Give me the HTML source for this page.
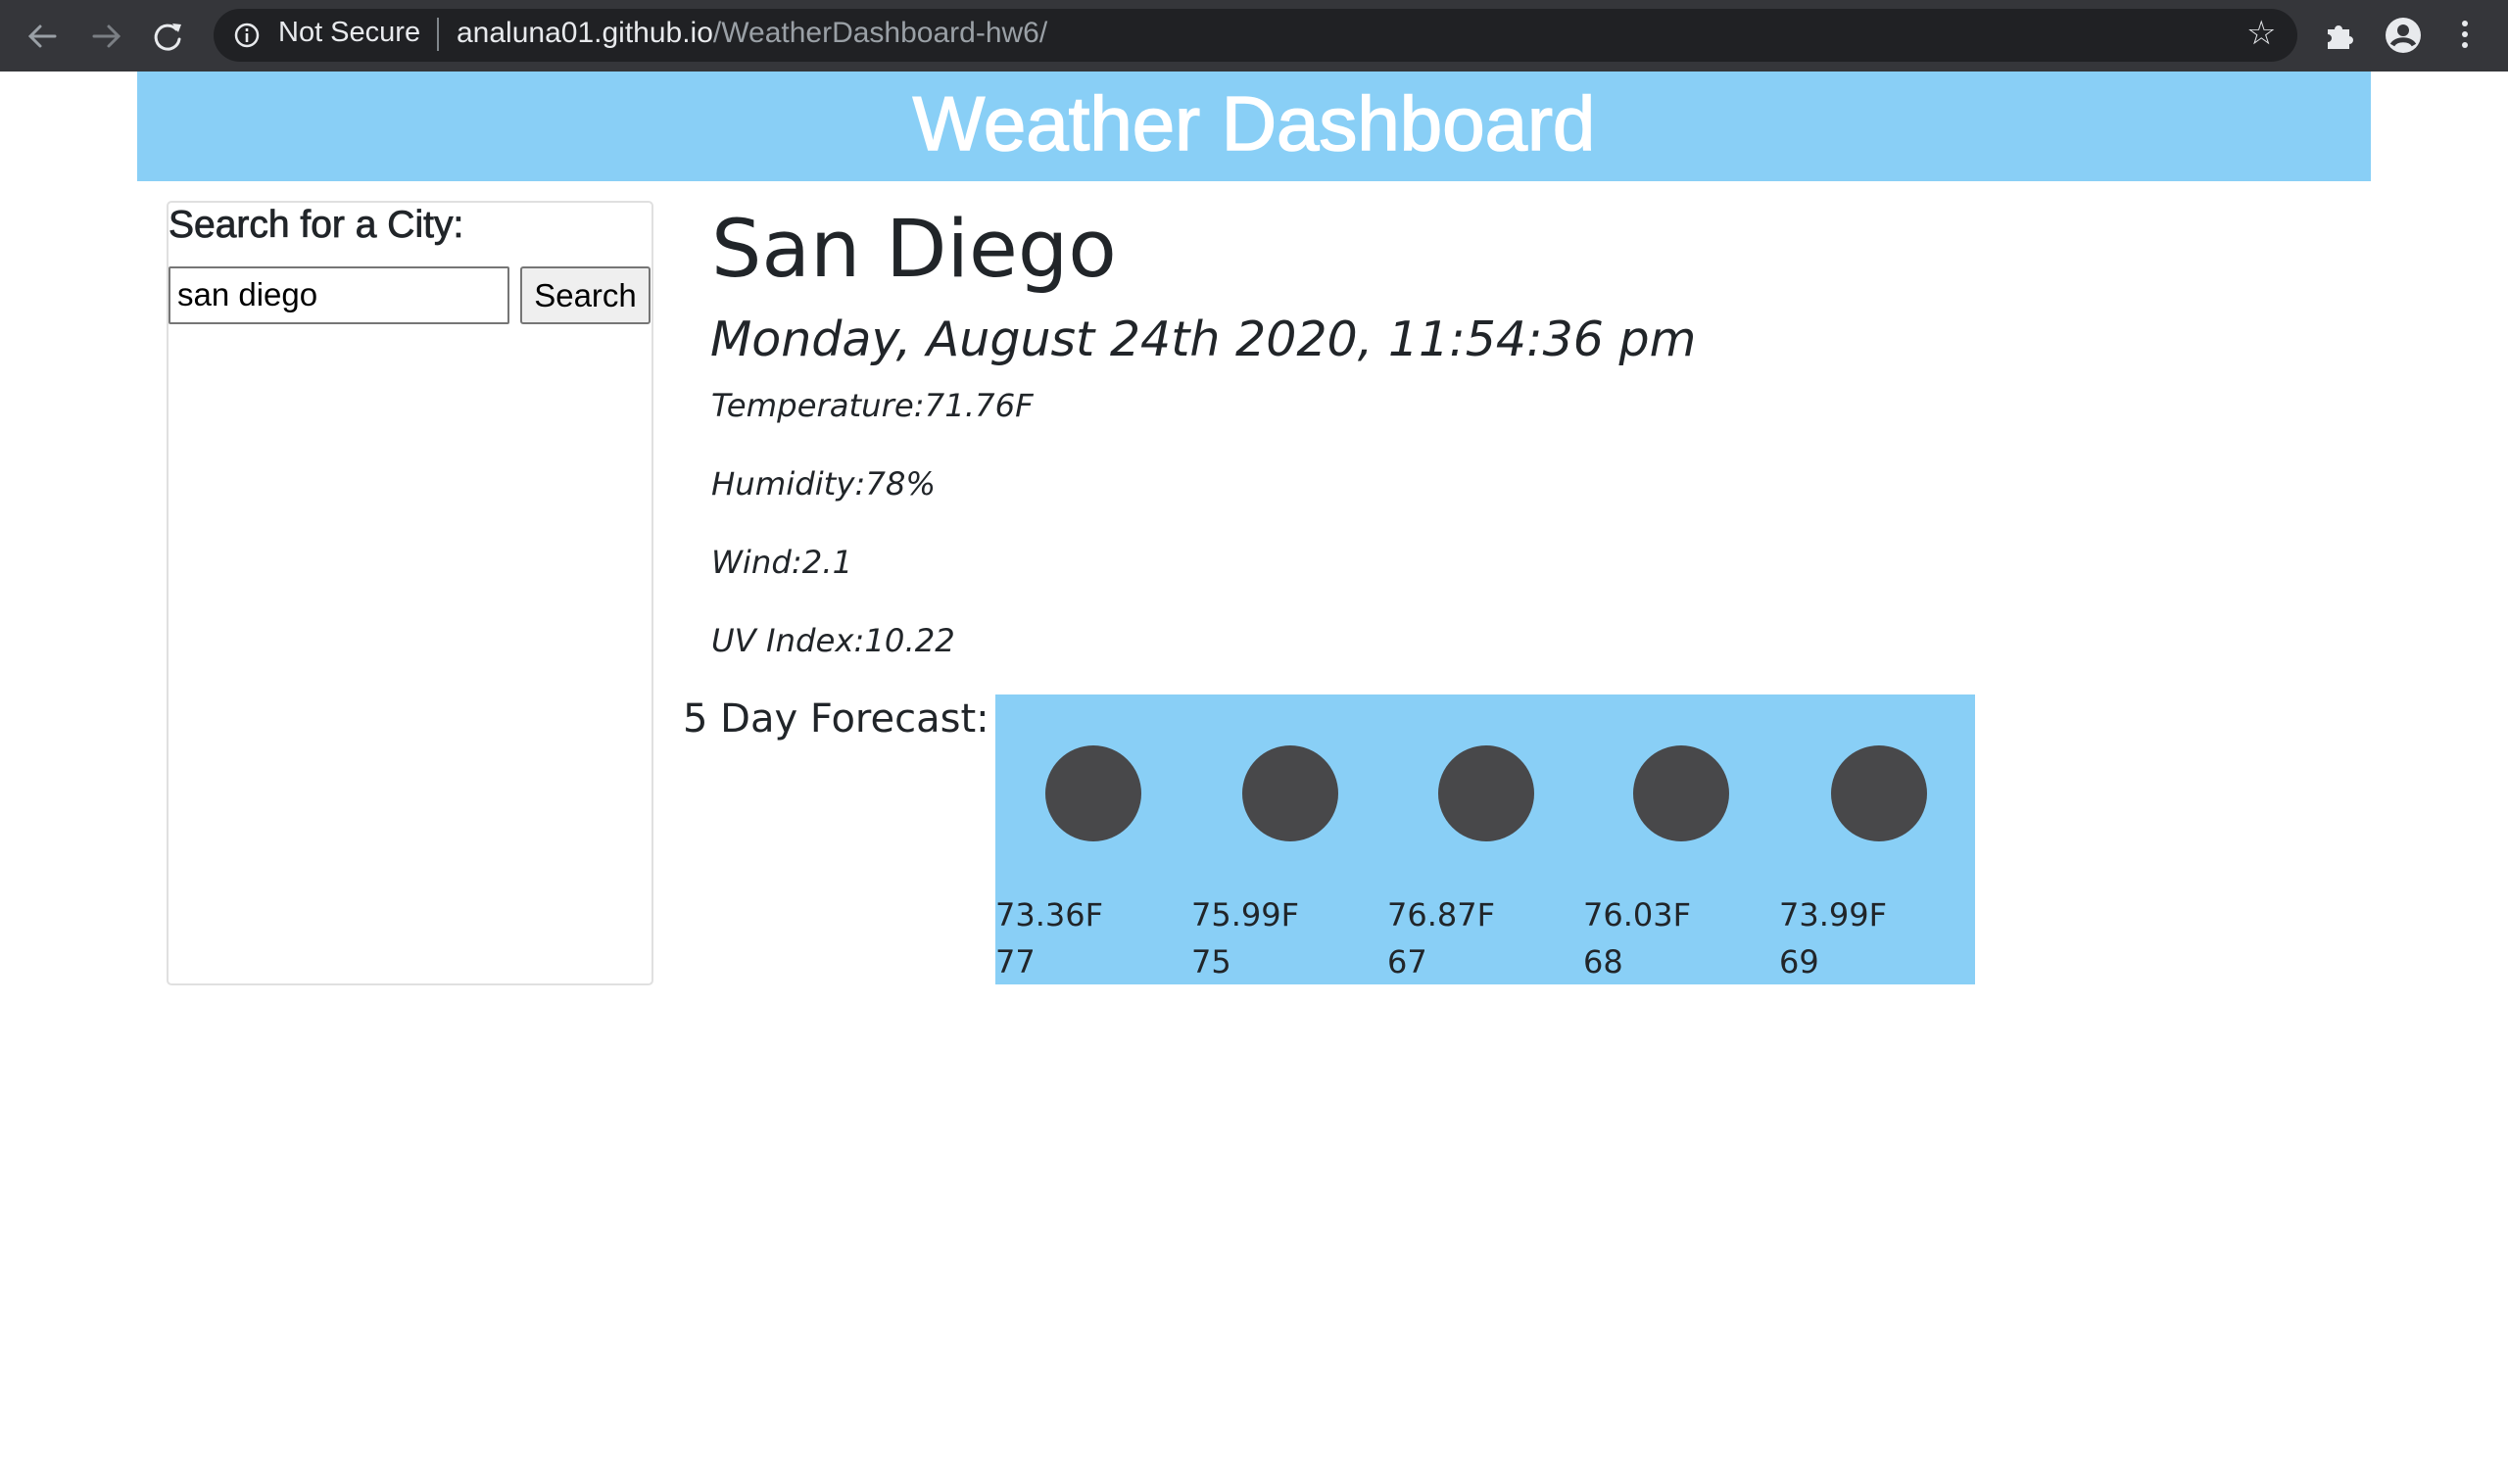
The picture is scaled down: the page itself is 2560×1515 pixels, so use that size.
<!DOCTYPE html>
<html><head><style>
body{margin:0;width:2560px;height:1515px;background:#fff;position:relative;overflow:hidden;font-family:"DejaVu Sans",sans-serif;color:#212529}
.a{position:absolute;white-space:nowrap}
.bar{position:absolute;left:0;top:0;width:2560px;height:73px;background:#35363a}
.url{position:absolute;left:218px;top:9px;width:2127px;height:54px;border-radius:27px;background:#202124}
.circ{position:absolute;width:98px;height:98px;border-radius:50%;background:#48484a;top:761px}
.ft{position:absolute;font-size:32px;line-height:48px;top:910px;color:#212529}
.it{font-style:italic;font-size:32.3px}
</style></head><body>
<div class="bar"></div>
<div class="url"></div>
<svg class="a" style="left:26px;top:20px" width="240" height="34" viewBox="0 0 240 34">
<g stroke="#9aa0a6" stroke-width="3" fill="none" stroke-linecap="round">
<path d="M30 17H6M15 7L5 17l10 10"/>
<path d="M70 17H94M85 7l10 10-10 10" stroke="#7b7f84"/>
<path d="M154 10a12 12 0 1 0 3 10" stroke="#e8eaed"/>
</g><path d="M150 4l9 1-3 8z" fill="#e8eaed"/></svg>
<svg class="a" style="left:238px;top:22px" width="28" height="28"><circle cx="14" cy="14" r="11" stroke="#e8eaed" stroke-width="2.5" fill="none"/><rect x="12.7" y="12" width="2.6" height="9" fill="#e8eaed"/><rect x="12.7" y="7" width="2.6" height="3" fill="#e8eaed"/></svg>
<div class="a" style="left:284px;top:17px;font:29px 'Liberation Sans',sans-serif;color:#e8eaed">Not Secure</div>
<div class="a" style="left:446px;top:18px;width:2px;height:34px;background:#80868b"></div>
<div class="a" style="left:466px;top:17px;font:30px 'Liberation Sans',sans-serif;color:#e8eaed">analuna01.github.io<span style="color:#9aa0a6">/WeatherDashboard-hw6/</span></div>
<div class="a" style="left:2293px;top:14px;font-size:34px;color:#e8eaed">☆</div>
<svg class="a" style="left:2372px;top:20px" width="32" height="32"><path d="M4 10h7a4 4 0 0 1 8 0h7v7a4 4 0 0 1 0 8v5H4v-7a4 4 0 0 0 0-8z" fill="#e8eaed"/></svg>
<svg class="a" style="left:2434px;top:17px" width="38" height="38"><circle cx="19" cy="19" r="18" fill="#e8eaed"/><circle cx="19" cy="14" r="6" fill="#35363a"/><path d="M8 29c4-7 18-7 22 0" stroke="#35363a" stroke-width="5" fill="none"/></svg>
<svg class="a" style="left:2512px;top:20px" width="8" height="32"><circle cx="4" cy="4" r="3" fill="#e8eaed"/><circle cx="4" cy="15" r="3" fill="#e8eaed"/><circle cx="4" cy="26" r="3" fill="#e8eaed"/></svg>

<div class="a" style="left:140px;top:73px;width:2280px;height:112px;background:#89cff6"></div>
<div class="a" style="left:140px;top:70px;width:2280px;height:112px;text-align:center;font:78px/112px 'Liberation Sans',sans-serif;color:#fff;-webkit-text-stroke:1.5px #fff">Weather Dashboard</div>

<div class="a" style="left:170px;top:205px;width:493px;height:797px;border:2px solid #e0e0e0;border-radius:5px"></div>
<div class="a" style="left:172px;top:208px;font:39px 'Liberation Sans',sans-serif;color:#212529;-webkit-text-stroke:0.8px #212529">Search for a City:</div>
<div class="a" style="left:172px;top:272px;width:344px;height:55px;border:2px solid #767676;border-radius:2px"></div>
<div class="a" style="left:181px;top:282px;font:33px 'Liberation Sans',sans-serif;color:#000">san diego</div>
<div class="a" style="left:531px;top:272px;width:129px;height:55px;border:2px solid #767676;border-radius:3px;background:#efefef;font:33px/55px 'Liberation Sans',sans-serif;text-align:center;color:#000">Search</div>

<div class="a" style="left:726px;top:208px;font-size:81px">San Diego</div>
<div class="a" style="left:725px;top:318px;font-size:49px;font-style:italic">Monday, August 24th 2020, 11:54:36 pm</div>
<div class="a it" style="left:726px;top:395px">Temperature:71.76F</div>
<div class="a it" style="left:726px;top:475px">Humidity:78%</div>
<div class="a it" style="left:726px;top:555px">Wind:2.1</div>
<div class="a it" style="left:726px;top:635px">UV Index:10.22</div>
<div class="a" style="left:697px;top:711px;font-size:40px">5 Day Forecast:</div>

<div class="a" style="left:1016px;top:709px;width:1000px;height:296px;background:#89cff6"></div>
<div class="circ" style="left:1067px"></div><div class="circ" style="left:1268px"></div><div class="circ" style="left:1468px"></div><div class="circ" style="left:1667px"></div><div class="circ" style="left:1869px"></div>
<div class="ft" style="left:1016px">73.36F<br>77</div>
<div class="ft" style="left:1216px">75.99F<br>75</div>
<div class="ft" style="left:1416px">76.87F<br>67</div>
<div class="ft" style="left:1616px">76.03F<br>68</div>
<div class="ft" style="left:1816px">73.99F<br>69</div>
</body></html>
